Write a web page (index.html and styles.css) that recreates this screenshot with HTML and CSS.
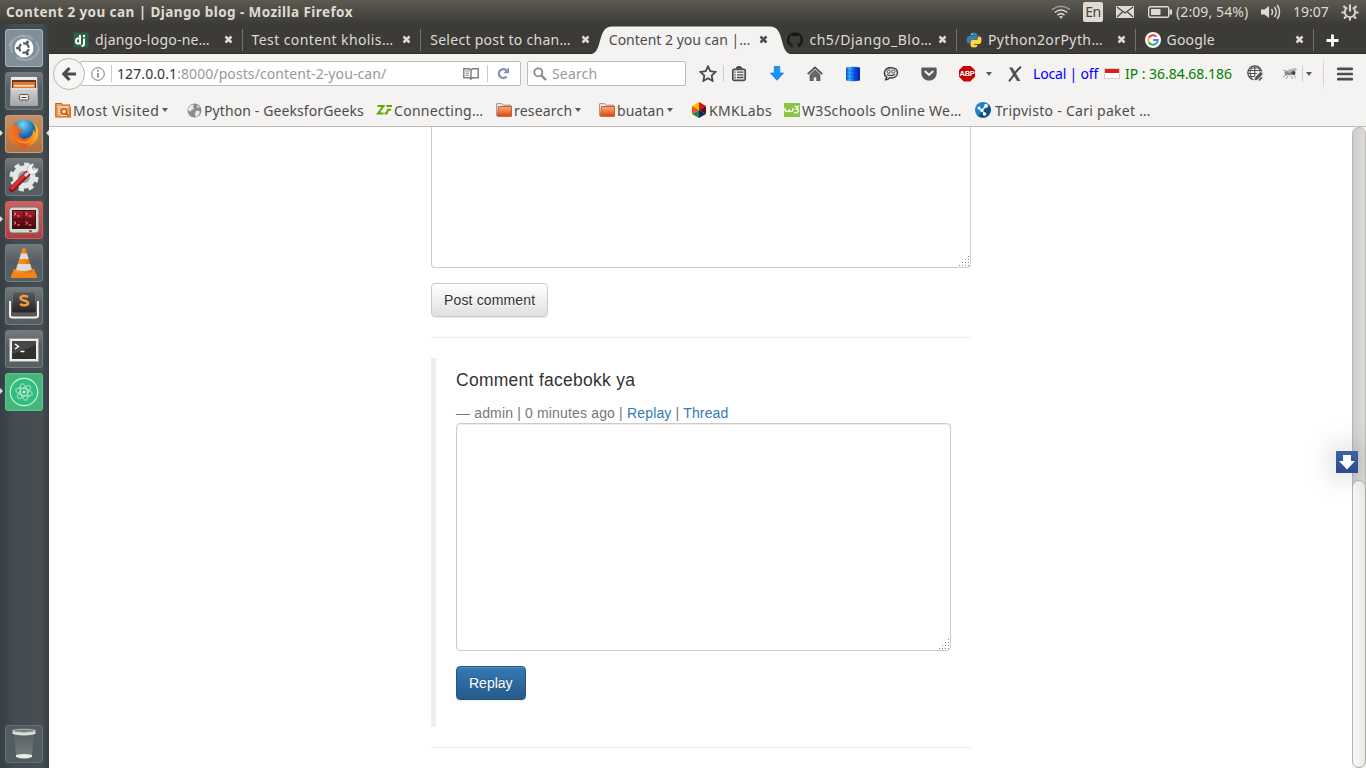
FILE: index.html
```html
<!DOCTYPE html>
<html lang="en">
<head>
<meta charset="utf-8">
<title>Content 2 you can | Django blog</title>
<link rel="stylesheet" href="styles.css">
</head>
<body>
<svg class="defs" width="0" height="0" aria-hidden="true">
  <defs>
    <linearGradient id="gTile" x1="0" y1="0" x2="0" y2="1"><stop offset="0" stop-color="#eeeeee"/><stop offset="1" stop-color="#a5a5a5"/></linearGradient>
    <linearGradient id="gFolder" x1="0" y1="0" x2="0" y2="1"><stop offset="0" stop-color="#f7ae78"/><stop offset=".5" stop-color="#ec7b42"/><stop offset="1" stop-color="#d6461a"/></linearGradient>
    <linearGradient id="gDark" x1="0" y1="0" x2="0" y2="1"><stop offset="0" stop-color="#5b5b5b"/><stop offset="1" stop-color="#232323"/></linearGradient>
    <linearGradient id="gBlue" x1="0" y1="0" x2="1" y2="0"><stop offset="0" stop-color="#0058d8"/><stop offset=".25" stop-color="#38b4ff"/><stop offset=".6" stop-color="#0a50e8"/><stop offset="1" stop-color="#0020b0"/></linearGradient>
    <linearGradient id="gRed" x1="0" y1="0" x2="0" y2="1"><stop offset="0" stop-color="#b91322"/><stop offset="1" stop-color="#4c0308"/></linearGradient>
    <radialGradient id="gOrb" cx=".45" cy=".2" r=".7"><stop offset="0" stop-color="#7ad5f4"/><stop offset=".6" stop-color="#1a70b6"/><stop offset="1" stop-color="#0a3575"/></radialGradient>
    <linearGradient id="gFox" x1="0" y1="0" x2="1" y2="0"><stop offset="0" stop-color="#f47b20"/><stop offset=".55" stop-color="#e8541b"/><stop offset="1" stop-color="#fbc02c"/></linearGradient>
    <linearGradient id="gCone" x1="0" y1="0" x2="1" y2="0"><stop offset="0" stop-color="#ff9c28"/><stop offset="1" stop-color="#e36b00"/></linearGradient>
    <linearGradient id="gGlass" x1="0" y1="0" x2="0" y2="1"><stop offset="0" stop-color="#5c6568"/><stop offset="1" stop-color="#8a9391"/></linearGradient>
    <symbol id="close" viewBox="0 0 9 9"><path d="M1.500 1.500l6 6M7.500 1.500l-6 6" stroke="currentColor" stroke-width="2.500"/></symbol>
    <symbol id="folder" viewBox="0 0 16 16"><path d="M.7 14V1.700h5l1.500 1.500h7.500V6" fill="#f6f4f2" stroke="#928a83"/><path d="M2.500 4.500h13v9.800h-14z" fill="url(#gFolder)" stroke="#c75a2a"/></symbol>
  </defs>
</svg>

<header class="panel">
  <div class="panel-title">Content 2 you can | Django blog - Mozilla Firefox</div>
  <div class="indicators">
    <svg class="i-wifi" width="20" height="14" viewBox="0 0 20 14" fill="none" stroke="#dfdbd2" stroke-width="1.500"><path d="M1 4.700q9-7 18 0" opacity=".55"/><path d="M3.700 7.500q6.300-5 12.600 0"/><path d="M6.500 10.100q3.500-3 7 0"/><path d="M8 11.700q2-1.500 4 0l-2 2z" fill="#dfdbd2" stroke="none"/></svg>
    <span class="i-lang">En</span>
    <svg class="i-mail" width="18" height="12" viewBox="0 0 18 12"><rect width="18" height="12" fill="#dfdbd2"/><path d="M1 1l8 6 8-6M1 11l5.500-5M17 11l-5.500-5" stroke="#45433e" fill="none" stroke-width="1.100"/></svg>
    <svg class="i-batt" width="24" height="12" viewBox="0 0 24 12"><rect x=".7" y=".7" width="20" height="10.600" rx="1.500" fill="none" stroke="#dfdbd2" stroke-width="1.400"/><path d="M3 3h9.500v6H3zM21.500 3.500H24v5h-2.500z" fill="#dfdbd2"/></svg>
    <span class="i-power">(2:09, 54%)</span>
    <svg class="i-sound" width="20" height="16" viewBox="0 0 20 16"><path d="M0 5.500h3.500L8 2v12l-4.500-3.500H0z" fill="#dfdbd2"/><path d="M10.500 5q2 3 0 6M13.500 3q3.500 5 0 10M16.300 1q4.500 7 0 14" fill="none" stroke="#dfdbd2" stroke-width="1.400"/></svg>
    <span class="i-time">19:07</span>
    <svg class="i-gear" width="18" height="18" viewBox="0 0 18 18" fill="none" stroke="#dfdbd2"><path d="M6.300 4.500a5.200 5.200 0 1 0 5.400 0" stroke-width="1.800"/><path d="M9 1.500v7" stroke-width="2"/><path d="M2.500 3l2 2M15.500 3l-2 2M.5 9.500h2.500M15 9.500h2.500M3 15.500l2-2M15 15.500l-2-2M9 15v2.500" stroke-width="2"/></svg>
  </div>
</header>

<div class="desktop">
<nav class="launcher">
  <div class="apps">
    <div class="tile t-dash"><svg width="38" height="38" viewBox="0 0 38 38"><path d="M7 24C2 10 17 2 27 9M31 13c8 10-5 23-17 16M4 17C9 5 22 5 28 11M34 20c-3 12-17 13-23 8" stroke="#c2cace" stroke-opacity=".4" stroke-width="2" fill="none"/><circle cx="19" cy="19" r="9.500" fill="#fff"/><circle cx="19" cy="19" r="4.700" fill="none" stroke="#525c61" stroke-width="2.200" stroke-dasharray="7.840 2" stroke-dashoffset="-1"/><g fill="#525c61"><circle cx="12.600" cy="19" r="1.600"/><circle cx="22.400" cy="13.200" r="1.600"/><circle cx="22.400" cy="24.800" r="1.600"/></g></svg></div>
    <div class="tile"><svg width="38" height="38" viewBox="0 0 38 38"><path d="M6 5h26l1 27.500a1.500 1.500 0 0 1-1.500 1.500h-25A1.500 1.500 0 0 1 5 32.500z" fill="url(#gTile)"/><path d="M7 8h24v8H7z" fill="#613626"/><path d="M8 10h22v6H8z" fill="#e77832"/><path d="M9 13h20v1.500H9z" fill="#fff0c6"/><path d="M5.500 16h27v2h-27z" fill="#d9d9d9"/><rect x="14.500" y="22.500" width="9" height="5.500" rx="1" fill="#eee" stroke="#555"/><path d="M16.500 25.500h5" stroke="#444"/></svg></div>
    <div class="tile t-fox running focused"><svg width="38" height="38" viewBox="0 0 38 38"><circle cx="19" cy="17.500" r="13" fill="url(#gOrb)"/><path d="M5.500 11l2.500-3 .5 3c1-1.500 3-2 4.500-1.500-1 1.500-.8 3 .5 4.500 2 .2 4 .2 4.500 1.200-1 2-3 2-4.500 3 .5 4 3.500 6.300 7.500 5.300 4-.8 7.500-3.500 7-9 1.500 1 2 2 2.300 3.500.8-4-.6-8-3.300-11.500 6 3.500 8 11 5 17.500-3 6-8.500 8.500-14.500 8C5 31 1 19 5.500 11z" fill="url(#gFox)"/><path d="M10 22c6 7 17 5 19-3 .8 5-3 9.500-8.500 9.500S11 26 10 22z" fill="#f9a424" fill-opacity=".7"/></svg></div>
    <div class="tile"><svg width="38" height="38" viewBox="0 0 38 38"><circle cx="19" cy="19" r="11.500" fill="#e6e6e6"/><circle cx="19" cy="19" r="12" fill="none" stroke="#e6e6e6" stroke-width="5" stroke-dasharray="5 4.400"/><circle cx="19" cy="19" r="6" fill="#969b9d"/><path d="M7 31l15-15" stroke="#891217" stroke-width="6" stroke-linecap="round"/><path d="M7 30l14-14" stroke="#da3237" stroke-width="3.500" stroke-linecap="round"/><path d="M20 18l4-4" stroke="#d7d7d7" stroke-width="3"/><path d="M23 14c-2-5 2-9 6-8l-2 4 2 2 4-2c1 4-4 8-8 6z" fill="#f3f3f3" stroke="#999" stroke-width=".6"/></svg></div>
    <div class="tile t-term running"><svg width="38" height="38" viewBox="0 0 38 38"><rect x="4" y="6" width="30" height="26" rx="3.500" fill="#d7d7d1" stroke="#6f6f6a"/><rect x="7" y="9" width="24" height="19" fill="#222"/><path d="M8 10h10.500v8H8zM19.500 10H30v8H19.500zM8 19h10.500v8H8zM19.500 19H30v8H19.500z" fill="url(#gRed)"/><path d="M9 11.500l2 1.500-2 1.500M12 15h3M20.500 11.500l2 1.500-2 1.500M23.500 15h3M9 20.500l2 1.500-2 1.500M12 24h3M20.500 20.500l2 1.500-2 1.500M23.500 24h3" fill="none" stroke="#f1c1c1" stroke-width=".8"/><path d="M24 30h3" stroke="#e21a1a" stroke-width="1.500"/></svg></div>
    <div class="tile"><svg width="38" height="38" viewBox="0 0 38 38"><path d="M9 25h20l3 7v2H6v-2z" fill="#f18414"/><path d="M17.500 4.500q1.500-1.500 3 0l7 23q-8.500 5-17 0z" fill="url(#gCone)"/><path d="M16 9.500h6l1.600 5.500h-9.200zM12.800 20h12.400l1.700 5.500q-8 3-15.800 0z" fill="#d9dbdc"/></svg></div>
    <div class="tile"><svg width="38" height="38" viewBox="0 0 38 38"><path d="M5 14v14.500q0 2 3 2h22q3 0 3-2V14" fill="#555" stroke="#f4f4f4" stroke-width="2"/><path d="M8 5h22l1.500 19q0 2-2 2h-21q-2 0-2-2z" fill="url(#gDark)" stroke="#777" stroke-width=".7"/><path d="M23 10c-3-2-7.500-1-7.500 1.300 0 2.700 7.500 1.700 7.500 4.700 0 2.700-5.200 3-8 1" fill="none" stroke="#f39b3e" stroke-width="2.500"/></svg></div>
    <div class="tile"><svg width="38" height="38" viewBox="0 0 38 38"><rect x="4.500" y="8.500" width="29" height="23" fill="#ededed" stroke="#999"/><rect x="7" y="11" width="24" height="18" fill="#30302e"/><path d="M7 11h24v4L7 24z" fill="#474745"/><path d="M10 14l3.500 2.500L10 19M15.500 21.500h4" fill="none" stroke="#fff" stroke-width="1.500"/></svg></div>
    <div class="tile t-atom running"><svg width="38" height="38" viewBox="0 0 38 38"><circle cx="19" cy="19" r="13.700" fill="#31bc80" stroke="#c7f5da" stroke-width="1.200"/><g fill="none" stroke="#c0edd3" stroke-width=".9"><ellipse cx="19" cy="19" rx="8.500" ry="3.500" transform="rotate(15 19 19)"/><ellipse cx="19" cy="19" rx="8.500" ry="3.500" transform="rotate(75 19 19)"/><ellipse cx="19" cy="19" rx="8.500" ry="3.500" transform="rotate(135 19 19)"/></g><circle cx="19" cy="19" r="1.300" fill="#eaffef"/></svg></div>
  </div>
  <div class="tile t-trash"><svg width="38" height="38" viewBox="0 0 38 38"><path d="M9 9l2 22q8 3 16 0l2-22z" fill="url(#gGlass)" fill-opacity=".6"/><path d="M11 30q8-2 16 0v2q-8 3-16 0z" fill="#e9ece4"/><path d="M7.500 5q11.500-2.500 23 0v4q-11.500 3-23 0z" fill="#c6cbc7"/><ellipse cx="19" cy="5.700" rx="10" ry="1.200" fill="#737b78"/><path d="M8 8q11 3 22 0" fill="none" stroke="#eef0ee"/></svg></div>
</nav>

<div class="window">
  <div class="tabs">
    <div class="tab sep"><svg class="fav" width="16" height="16" viewBox="0 0 16 16"><rect x=".5" y=".5" width="15" height="15" fill="#2b6346"/><path d="M7 3v8.500H4.800Q3 11.500 3 9t1.800-2.500H7M11 6.500V12q0 2-2.500 2" fill="none" stroke="#fff" stroke-width="2"/><circle cx="11" cy="4" r="1.200" fill="#fff"/></svg><span class="tl t1">django-logo-ne…</span><svg class="x"><use href="#close"/></svg></div>
    <div class="tab sep"><span class="tl t2">Test content kholis…</span><svg class="x"><use href="#close"/></svg></div>
    <div class="tab"><span class="tl t3">Select post to chan…</span><svg class="x"><use href="#close"/></svg></div>
    <div class="tab active"><svg class="shape" width="204" height="29" viewBox="0 0 204 29"><path d="M0 28.500C15 28.500 7 .5 23 .5h158c16 0 8 28 23 28z" fill="#f4f3f2"/></svg><span class="tl t4">Content 2 you can |…</span><svg class="x"><use href="#close"/></svg></div>
    <div class="tab sep"><svg class="fav" width="16" height="16" viewBox="0 0 16 16"><path d="M8 .2a8 8 0 0 0-2.500 15.600v-2.500c-2.300.4-2.800-1-3.300-1.800 1.300.1 1.300 1.200 2.300 1.100.5 0 .9-.3 1.200-.9-2.500-.5-3.500-1.600-3.500-3.800 0-.9.300-1.700.9-2.300-.2-.8-.1-1.600.1-2.200.9 0 1.700.5 2.300.9a8 8 0 0 1 5 0c.7-.5 1.500-.9 2.300-.9.300.7.300 1.500.1 2.200.6.600.9 1.400.9 2.300 0 2.200-1 3.300-3.300 3.800.5.500.7 1 .7 1.800v2A8 8 0 0 0 8 .2z" fill="#171717"/></svg><span class="tl t5">ch5/Django_Blo…</span><svg class="x"><use href="#close"/></svg></div>
    <div class="tab sep"><svg class="fav" width="16" height="16" viewBox="0 0 16 16"><path d="M4.500 3q0-2.500 3.500-2.500t3.500 2.500v3q0 2-2 2H6q-2 0-2 2v1.500H2.500Q.5 11.500.5 8t2-4h5.500v-.8H4.500z" fill="#3c7cb0"/><path d="M11.500 13q0 2.500-3.500 2.500T4.500 13v-3q0-2 2-2H10q2 0 2-2V4.500h1.500q2 0 2 3.500t-2 4H8v.8h3.500z" fill="#ffd545"/><circle cx="6" cy="2.200" r=".7" fill="#fff"/></svg><span class="tl t6">Python2orPyth…</span><svg class="x"><use href="#close"/></svg></div>
    <div class="tab sep"><svg class="fav" width="16" height="16" viewBox="0 0 16 16"><circle cx="8" cy="8" r="8" fill="#fff"/><g fill="none" stroke-width="2"><path d="M11.500 4.600A4.700 4.700 0 0 0 3.900 5.800" stroke="#ea4335"/><path d="M3.900 5.800a4.700 4.700 0 0 0 0 4.400" stroke="#fbbc05"/><path d="M3.900 10.200a4.700 4.700 0 0 0 7.300 1.300" stroke="#34a853"/><path d="M8 8h4.700c0 1.500-.5 2.600-1.500 3.500" stroke="#4285f4"/></g></svg><span class="tl t7">Google</span><svg class="x"><use href="#close"/></svg></div>
    <svg class="newtab" width="13" height="13" viewBox="0 0 13 13"><path d="M6.500.5v12M.5 6.500h12" stroke="#fff" stroke-width="2.800"/></svg>
  </div>

  <div class="navbar">
    <div class="back"><svg width="16" height="16" viewBox="0 0 16 16"><path d="M8.500 2L2.800 8l5.700 6M3 8h12" fill="none" stroke="#4c4c4c" stroke-width="3.200"/></svg></div>
    <div class="urlbar">
      <svg class="info" width="14" height="14" viewBox="0 0 14 14"><circle cx="7" cy="7" r="6.300" fill="none" stroke="#777" stroke-width="1"/><path d="M7 6v4.500M7 3v1.700" stroke="#777" stroke-width="1.500"/></svg>
      <i class="vsep"></i>
      <span class="url"><b>127.0.0.1</b>:8000/posts/content-2-you-can/</span>
      <svg class="reader" width="16" height="13" viewBox="0 0 16 13"><path d="M.8 1.800h5.700L8 3l1.500-1.200h5.700v9H9.500L8 12l-1.500-1.200H.8zM8 3v9" fill="none" stroke="#818181" stroke-width="1.500"/><path d="M2.500 4h4M2.500 6.200h3.500M2.500 8.400h3.500" stroke="#818181"/></svg>
      <i class="vsep"></i>
      <svg class="reload" width="13" height="13" viewBox="0 0 13 13"><path d="M9.700 9.600a4.500 4.500 0 1 1 .1-6" fill="none" stroke="#8292a8" stroke-width="2.200"/><path d="M12 .5v5.700H6.300z" fill="#8292a8"/></svg>
    </div>
    <div class="search"><svg width="14" height="14" viewBox="0 0 14 14"><circle cx="5.300" cy="5.300" r="4" fill="none" stroke="#8b8b8b" stroke-width="1.800"/><path d="M8.300 8.300l4.700 4.700" stroke="#8b8b8b" stroke-width="2.400"/></svg><span>Search</span></div>
    <div class="cell star"><svg width="18" height="17" viewBox="0 0 18 17"><path d="M9 1.300l2.300 4.900 5.200.7-3.800 3.700.9 5.300L9 13.300l-4.600 2.600.9-5.300L1.500 6.900l5.200-.7z" fill="none" stroke="#4c4c4c" stroke-width="1.800"/></svg></div>
    <i class="vsep"></i>
    <div class="cell list"><svg width="16" height="16" viewBox="0 0 16 16" fill="none" stroke="#4c4c4c"><rect x="1.800" y="3.300" width="12.400" height="11" rx="1.300" stroke-width="1.700"/><path d="M5 2.800q0-2.300 3-2.300t3 2.300" fill="#4c4c4c"/><path d="M6 6.200h6.500M6 8.800h6.500M6 11.500h6.500M3.300 6.200h1.500M3.300 8.800h1.500M3.300 11.500h1.500" stroke-width="1.300"/></svg></div>
    <div class="cell"><svg width="14" height="15" viewBox="0 0 14 15"><path d="M4.300.5h5.400V7h3.800L7 14.300.5 7h3.800z" fill="#1697ff" stroke="#096ad2" stroke-width=".7"/></svg></div>
    <div class="cell"><svg width="16" height="15" viewBox="0 0 16 15"><path d="M.7 8.200L8 1.300l7.300 6.900" fill="none" stroke="#4c4c4c" stroke-width="1.600"/><path d="M3 8.500l5-4.700 5 4.700V15H9.700v-4H6.300v4H3z" fill="#686868" stroke="#4c4c4c" stroke-width=".6"/></svg></div>
    <div class="cell"><svg width="16" height="16" viewBox="0 0 16 16"><path d="M1 1.500q7-1.500 14 0v13q-7 1.500-14 0z" fill="url(#gBlue)"/><path d="M1 4.500q7 1.500 14 0M1 8q7 1.500 14 0M1 11.500q7 1.500 14 0" fill="none" stroke="#052d97" stroke-opacity=".45" stroke-width=".8"/></svg></div>
    <div class="cell"><svg width="16" height="14" viewBox="0 0 16 14"><path d="M8 .8c4 0 6.500 2 6.500 4.900S12 11 8 11l-1.500-.1q-1.500 2-4 2l1.200-2.900C0 8 .5.800 8 .8z" fill="#dedede" stroke="#3a3a3a" stroke-width="1.400"/><circle cx="5.800" cy="4.600" r="1.500" fill="#fff" stroke="#444"/><circle cx="10.300" cy="4.600" r="1.500" fill="#fff" stroke="#444"/><path d="M4 7.500q4 2 8 0" fill="none" stroke="#333" stroke-width="1.200"/></svg></div>
    <div class="cell"><svg width="16" height="14" viewBox="0 0 16 14"><path d="M1.500.5h13q1.200 0 1.200 1.200V6c0 4-3.200 7.600-7.700 7.600S.3 10 .3 6V1.700Q.3.500 1.500.5z" fill="#595959"/><path d="M4.300 4.600L8 8l3.700-3.400" fill="none" stroke="#f4f3f2" stroke-width="2" stroke-linecap="round"/></svg></div>
    <div class="cell"><span class="abp">ABP</span></div>
    <i class="caret"></i>
    <div class="cell xtool"><svg width="14" height="16" viewBox="0 0 14 16"><path d="M1 1.500h3.500L12.500 15H9z" fill="#555"/><path d="M13 .8C8 4 6 10 1 15.200" stroke="#4c4c4c" stroke-width="2" fill="none"/></svg></div>
    <span class="local">Local | off</span>
    <i class="flag"></i>
    <span class="ip">IP : 36.84.68.186</span>
    <svg class="globe" width="17" height="17" viewBox="0 0 17 17" fill="none" stroke="#4c4c4c"><circle cx="7.800" cy="7.800" r="7" stroke-width="1.200"/><path d="M1 5.500h13.600M.8 8.500h9M2 11.500h6M3.500 3h9M7.800.8v12M4.500 1.700q-3 6 0 12M11 1.700q2 3 1.500 5"/><path d="M6.500 16l1.300-4L13.500 6l3 3-6 6z" fill="#666" stroke="#f4f3f2"/><path d="M8.500 14.500l6-6M12 15.500l3-3" stroke-width="1.300"/></svg>
    <svg class="fly" width="16" height="13" viewBox="0 0 16 13"><path d="M1 3l4 1.500L4 8l-3 2M6 9l-2 3M9 9l2 3M12 8l2 3" stroke="#777" stroke-width=".7" fill="none"/><ellipse cx="6.500" cy="6" rx="4" ry="2.300" fill="#858585"/><ellipse cx="10" cy="3.500" rx="5" ry="1.800" fill="#b2b2b2" transform="rotate(-14 10 3)"/><circle cx="11.500" cy="6" r="2" fill="#454545"/></svg>
    <i class="vsep flysep"></i>
    <i class="caret"></i>
    <i class="vsep tall"></i>
    <svg class="menu" width="16" height="14" viewBox="0 0 16 14"><path d="M1.200 1.800h13.600M1.200 7h13.600M1.200 12.200h13.600" stroke="#4c4c4c" stroke-width="2.700" stroke-linecap="round"/></svg>
  </div>

  <div class="bookmarks">
    <div class="bm"><svg width="16" height="16" viewBox="0 0 16 16"><path d="M.8 15V1.500h5.500L7.500 3h7v2.500h.8V15z" fill="#f0a15c" stroke="#cb5f15" stroke-width="1.200"/><path d="M2.500 5h12" stroke="#fff2dc"/><path d="M3 7.500h2M3 9.500h2M3 11.500h2M5.500 13.500h7" stroke="#fff2dc"/><circle cx="9" cy="9.500" r="2.700" fill="#f8d5ac" stroke="#be5614" stroke-width="1.300"/><path d="M11 11.500l2.500 2.500" stroke="#be5614" stroke-width="1.500"/></svg><span class="b1">Most Visited</span><i class="caret"></i></div>
    <div class="bm"><svg width="15" height="15" viewBox="0 0 15 15"><circle cx="7.500" cy="7.500" r="7" fill="#8c8c8c"/><path d="M1 5l3-3 3-.5L6 4l1 2-2.500 1-1 1.500L1.500 8zM8.500 8.500l2-1 2.500 1-1 3-2.500 2.500-1.500-2zM10 2l3 2-2.500 1z" fill="#e7e7e7"/></svg><span class="b2">Python - GeeksforGeeks</span></div>
    <div class="bm"><svg width="16" height="10" viewBox="0 0 16 10"><path d="M1.500 1h6L2 8.500h5.500M8.500 8.500h2L12 4.700h3M10.500 1H16" fill="none" stroke="#62a700" stroke-width="2"/></svg><span class="b3">Connecting…</span></div>
    <div class="bm"><svg width="16" height="16"><use href="#folder"/></svg><span class="b4">research</span><i class="caret"></i></div>
    <div class="bm"><svg width="16" height="16"><use href="#folder"/></svg><span class="b5">buatan</span><i class="caret"></i></div>
    <div class="bm"><svg width="16" height="16" viewBox="0 0 16 16"><path d="M8 0L1 4l7 4z" fill="#ffc400"/><path d="M8 0l7 4-7 4z" fill="#d61217"/><path d="M15 4v8L8 8z" fill="#69071a"/><path d="M15 12l-7 4V8z" fill="#1b1f68"/><path d="M8 16l-7-4 7-4z" fill="#158b3e"/><path d="M1 12V4l7 4z" fill="#ef5415"/></svg><span class="b6">KMKLabs</span></div>
    <div class="bm"><svg width="16" height="14" viewBox="0 0 16 14"><rect width="16" height="14" fill="#8ac53f"/><path d="M1 5v1.500q0 2 2 2t2-2q0 2 2 2t2-2V5M10.500 3.500h3.500l-1.700 2.500q2.500 0 2 2.200T10 9.500" fill="none" stroke="#fff" stroke-width="1.400"/></svg><span class="b7">W3Schools Online We…</span></div>
    <div class="bm"><svg class="trip" width="16" height="16" viewBox="0 0 16 16"><circle cx="8" cy="8" r="8" fill="#1d83c4"/><path d="M3 14L14 3q3 4 1 8-4 7-12 3z" fill="#124c83"/><path d="M6.500 8L4 6M7 8l4-4M7 8l2.500 4" stroke="#fff" stroke-width="1.200"/><g fill="#fff"><circle cx="4" cy="6" r="1.500"/><circle cx="11" cy="4" r="2"/><circle cx="6.800" cy="8.300" r="1.600"/><circle cx="9.500" cy="12" r="1.800"/></g></svg><span class="b8">Tripvisto - Cari paket …</span></div>
  </div>

  <div class="viewport">
    <main class="page">
      <div class="column">
        <div class="field"><textarea class="area first" aria-label="Comment"></textarea><svg class="grip" width="10" height="10" viewBox="0 0 10 10"><path d="M9 0h1v1H9zM6 3h1v1H6zM9 3h1v1H9zM3 6h1v1H3zM6 6h1v1H6zM9 6h1v1H9zM0 9h1v1H0zM3 9h1v1H3zM6 9h1v1H6zM9 9h1v1H9z" fill="#888"/></svg></div>
        <button class="btn">Post comment</button>
        <hr>
        <blockquote>
          <p>Comment facebokk ya</p>
          <footer>— admin | 0 minutes ago | <a>Replay</a> | <a>Thread</a></footer>
          <div class="field"><textarea class="area reply" aria-label="Reply"></textarea><svg class="grip" width="10" height="10" viewBox="0 0 10 10"><path d="M9 0h1v1H9zM6 3h1v1H6zM9 3h1v1H9zM3 6h1v1H3zM6 6h1v1H6zM9 6h1v1H9zM0 9h1v1H0zM3 9h1v1H3zM6 9h1v1H6zM9 9h1v1H9z" fill="#888"/></svg></div>
          <button class="btn primary">Replay</button>
        </blockquote>
        <hr>
      </div>
    </main>
    <div class="scrollbar"><div class="trough"><div class="thumb"></div></div></div>
    <div class="jump"><svg width="22" height="22" viewBox="0 0 22 22"><path d="M7 4h8v6h4l-8 8.500L3 10h4z" fill="#fff"/></svg></div>
  </div>
</div>
</div>
</body>
</html>
```

FILE: styles.css
```css
* { box-sizing: border-box; }
body { margin: 0; width: 1366px; height: 768px; overflow: hidden; display: flex; flex-direction: column; font-family: "Noto Sans", "Open Sans", sans-serif; font-size: 14px; color: #4c4c4c; background: #fff; }
svg { display: block; flex: none; }
i { flex: none; }
.defs { position: absolute; }

.panel { height: 24px; flex: none; display: flex; justify-content: space-between; align-items: center; padding: 0 7px 0 6px; background: linear-gradient(#5c5a50, #55534b 20%, #3d3b37); color: #dfdbd2; }
.panel-title { font-weight: 700; font-size: 13.5px; white-space: nowrap; line-height: 24px; letter-spacing: .43px; }
.indicators { display: flex; align-items: center; line-height: 24px; white-space: nowrap; }
.i-lang { width: 20px; height: 20px; margin: 0 13px 0 12px; border-radius: 2px; background: #dfdbd2; color: #45433e; line-height: 20px; text-align: center; letter-spacing: -.5px; }
.i-mail { margin-right: 14px; }
.i-batt { margin-right: 4px; }
.i-power { width: 72px; margin-right: 13px; letter-spacing: .1px; }
.i-sound { margin-right: 13px; }
.i-time { width: 36px; margin: 0 12px 0 -1px; letter-spacing: 0; }

.desktop { flex: 1; display: flex; min-height: 0; }
.launcher { width: 49px; flex: none; display: flex; flex-direction: column; justify-content: space-between; padding: 5px; background: linear-gradient(90deg, #363f43, #434c50 30%, #454e51 85%, #363f43); }
.apps { display: grid; gap: 5px; }
.tile { position: relative; width: 38px; height: 38px; border-radius: 4px; background: linear-gradient(#747c7f, #555e62 45%, #565f62); box-shadow: inset 0 0 0 1px #737b7e; }
.t-dash { background: #809099; box-shadow: inset 0 0 0 1px #a5b2b8; }
.t-fox { background: linear-gradient(#c49269, #b06f3f); box-shadow: inset 0 0 0 1px #cc9f79; }
.t-term { background: linear-gradient(#d06261, #b03e40); box-shadow: inset 0 0 0 1px #c66162; }
.t-atom { background: #45b77c; box-shadow: inset 0 0 0 1px #5fc48e; }
.t-trash { background: #515c60; box-shadow: inset 0 0 0 1px #667074; }
.running::before { content: ""; position: absolute; left: -5px; top: 15px; border: solid transparent; border-width: 3px 0 3px 3px; border-left-color: #dcdcdc; }
.focused::after { content: ""; position: absolute; right: -6px; top: 15px; border: solid transparent; border-width: 3px 3px 3px 0; border-right-color: #dcdcdc; }

.window { flex: 1; min-width: 0; display: flex; flex-direction: column; background: #f4f3f2; }
.tabs { height: 30px; flex: none; display: flex; padding-left: 15px; background: #3c3b37; border-bottom: 1px solid #2f2e2b; }
.tab { position: relative; width: 178.6px; flex: none; display: flex; align-items: center; padding: 2px 10px 0 9px; color: #dfdbd2; }
.sep::after { content: ""; position: absolute; right: 0; top: 5px; width: 1px; height: 22px; background: #74726d; }
.fav { margin-right: 6px; }
.tl { flex: 1; white-space: nowrap; position: relative; }
.t1 { letter-spacing: .22px; }
.t2 { letter-spacing: .4px; }
.t3 { letter-spacing: .28px; }
.t5 { letter-spacing: .55px; }
.t6 { letter-spacing: .42px; }
.t7 { letter-spacing: .15px; }
.x { width: 9px; height: 9px; position: relative; }
.active { color: #4c4c4c; z-index: 1; }
.shape { position: absolute; left: -11px; top: 2px; }
.newtab { margin: 10px 0 0 12px; }

.navbar { height: 40px; flex: none; display: flex; align-items: center; padding: 0 0 1px 4px; white-space: nowrap; }
.back { width: 32px; height: 32px; flex: none; display: grid; place-items: center; border: 1px solid #b8b5b2; border-radius: 50%; background: #f7f6f5; position: relative; z-index: 1; }
.urlbar { width: 441px; height: 25px; flex: none; margin-left: -5px; display: flex; align-items: center; padding: 0 10px; border: 1px solid #bebbb8; border-radius: 2px; background: #fff; color: #999; }
.urlbar b { font-weight: 400; color: #333; }
.vsep { width: 1px; height: 17px; background: #cfccca; }
.info { margin-right: 6px; }
.url { width: 351px; padding-left: 5px; letter-spacing: .09px; }
.reader { margin-right: 8px; }
.reload { margin-left: 9px; }
.search { width: 159px; height: 25px; flex: none; margin: 0 7px 0 6px; display: flex; align-items: center; gap: 5px; padding-left: 5px; border: 1px solid #bebbb8; border-radius: 2px; background: #fff; color: #999; letter-spacing: .15px; }
.cell { width: 38px; flex: none; display: flex; justify-content: center; }
.star { width: 30px; }
.list { width: 30px; margin-right: 4px; }
.abp { width: 16px; height: 16px; background: #c70000; color: #fff; font: 700 7.5px/16px "Liberation Sans", sans-serif; text-align: center; clip-path: polygon(30% 0, 70% 0, 100% 30%, 100% 70%, 70% 100%, 30% 100%, 0 70%, 0 30%); letter-spacing: -.3px; }
.caret { border: solid transparent; border-width: 4px 3px 0; border-top-color: #5b5b5b; }
.xtool { width: 20px; margin-left: 13px; }
.local { width: 67px; margin-left: 8px; color: #00f; letter-spacing: -.18px; }
.flag { width: 16px; height: 11px; margin: 0 5px 0 4px; background: linear-gradient(#dc2020 50%, #fff 50%); border: 1px solid #dccfcd; }
.ip { width: 107px; color: #008000; letter-spacing: -.04px; }
.globe { margin: 0 18px 0 15px; }
.fly { margin-right: 4px; }
.flysep { margin-right: 3px; }
.tall { height: 36px; margin: 0 13px 0 11px; background: linear-gradient(transparent, #d4d1cf 30%, #d4d1cf 70%, transparent); }

.bookmarks { height: 33px; flex: none; display: grid; grid-template-columns: 132px 189px 120px 103px 92px 93px 191px 200px; padding-left: 6px; border-bottom: 1px solid #bdbab7; align-items: center; white-space: nowrap; }
.bm { display: flex; align-items: center; gap: 2px; }
.bm .caret { margin-left: 1px; }
.b1 { letter-spacing: .48px; }
.b2 { letter-spacing: .1px; }
.b3 { letter-spacing: .28px; }
.b4 { letter-spacing: .2px; }
.b5 { letter-spacing: .1px; }
.b6 { letter-spacing: .35px; }
.b7 { letter-spacing: .3px; }
.b8 { letter-spacing: .28px; }
.trip + span { margin-left: 2px; }

.viewport { flex: 1; min-height: 0; position: relative; display: flex; background: #fff; }
.page { flex: 1; overflow: hidden; font: 14px/20px "Liberation Sans", Arial, sans-serif; color: #333; }
.column { width: 540px; margin-left: 382px; }
.field { position: relative; }
.area { display: block; width: 100%; resize: none; border: 1px solid #ccc; border-radius: 4px; background: #fff; outline: 0; box-shadow: inset 0 1px 1px rgba(0, 0, 0, .075); }
.first { height: 141px; border-top: 0; border-radius: 0 0 4px 4px; box-shadow: none; }
.reply { height: 228px; }
.grip { position: absolute; right: 2px; bottom: 2px; }
.btn { display: block; height: 34px; margin-top: 15px; padding: 6px 12px; border: 1px solid #ccc; border-radius: 4px; background: linear-gradient(#fff, #e0e0e0); font: 14px/20px "Liberation Sans", Arial, sans-serif; letter-spacing: .15px; color: #333; text-shadow: 0 1px 0 #fff; box-shadow: inset 0 1px 0 rgba(255, 255, 255, .15), 0 1px 1px rgba(0, 0, 0, .075); }
.primary { border-color: #245580; background: linear-gradient(#337ab7, #265a88); color: #fff; letter-spacing: 0; text-shadow: 0 -1px 0 rgba(0, 0, 0, .2); }
hr { height: 1px; margin: 20px 0; border: 0; background: #eee; }
blockquote { height: 369px; margin: 0; padding: 10px 20px; border-left: 5px solid #eee; }
blockquote p { margin: 0 0 10px; font-size: 17.5px; line-height: 25px; letter-spacing: .27px; }
blockquote footer { line-height: 20px; color: #777; letter-spacing: .16px; }
blockquote a { color: #337ab7; }
.scrollbar { width: 14px; flex: none; display: flex; background: #f4f3f2; }
.trough { flex: 1; display: flex; align-items: flex-end; border: 1px solid #b9b6b3; border-radius: 7px; background: linear-gradient(90deg, #cfcdcb, #dddbda); }
.thumb { flex: 1; height: 288px; margin: 0 -1px -1px; border: 1px solid #b5b2af; border-radius: 7px; background: linear-gradient(90deg, #fafafa, #e9e8e7); }
.jump { position: absolute; right: 8px; top: 324px; width: 22px; height: 22px; background: linear-gradient(#3d62a8, #2c4a8c); box-shadow: 0 0 30px rgba(0, 0, 0, .3); }
```
